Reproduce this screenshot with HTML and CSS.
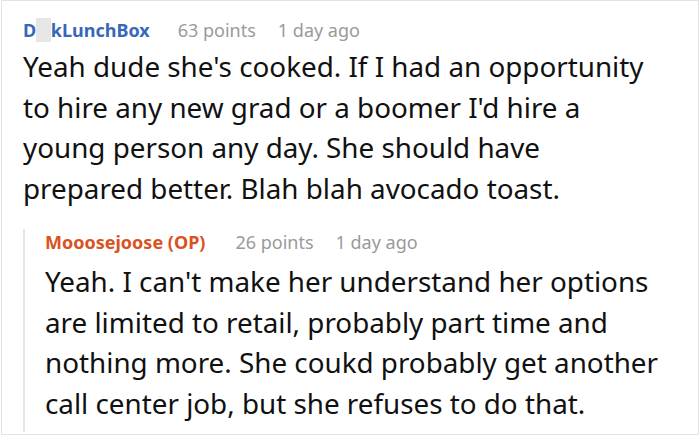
FILE: index.html
```html
<!DOCTYPE html>
<html>
<head>
<meta charset="utf-8">
<link rel="stylesheet" href="styles.css">
</head>
<body>
<div class="thread">
  <div class="comment">
    <div class="meta">
      <span class="author author-blue">D<span class="blur">ic</span>kLunchBox</span>
      <span class="points">63 points</span>
      <span class="time">1 day ago</span>
    </div>
    <p class="body">Yeah dude she's cooked. If I had an opportunity to hire any new grad or a boomer I'd hire a young person any day. She should have prepared better. Blah blah avocado toast.</p>
  </div>
  <div class="reply">
    <div class="meta">
      <span class="author author-orange">Mooosejoose (OP)</span>
      <span class="points">26 points</span>
      <span class="time">1 day ago</span>
    </div>
    <p class="body">Yeah. I can't make her understand her options are limited to retail, probably part time and nothing more. She coukd probably get another call center job, but she refuses to do that.</p>
  </div>
</div>
</body>
</html>
```

FILE: styles.css
```css
html, body {
  margin: 0;
  padding: 0;
  background: #ffffff;
}
body {
  font-family: "Noto Sans", "Open Sans", sans-serif;
  color: #111111;
}
.thread {
  box-sizing: border-box;
  width: 698px;
  height: 435px;
  margin-left: 1px;
  border: 1px solid #e3e3e3;
  padding: 16px 36px 0 21px;
  overflow: hidden;
}
.meta {
  display: flex;
  align-items: baseline;
  font-size: 18px;
  line-height: 26px;
}
.author {
  font-weight: 700;
  margin-right: 28px;
}
.reply .author {
  margin-right: 30px;
}
.author-blue { color: #3768b8; }
.author-orange { color: #d9531f; }
.blur {
  background: #e6e6e6;
  color: transparent;
}
.points, .time {
  color: #9a9a9a;
}
.points {
  margin-right: 22px;
}
.body {
  margin: 0;
  font-size: 27.8px;
  line-height: 40.7px;
}
.comment .body {
  margin-top: 3px;
}
.reply {
  margin-top: 20px;
  border-left: 2px solid #e6e6e6;
  padding-left: 20px;
  padding-bottom: 8px;
}
.reply .body {
  margin-top: 6px;
}
```
